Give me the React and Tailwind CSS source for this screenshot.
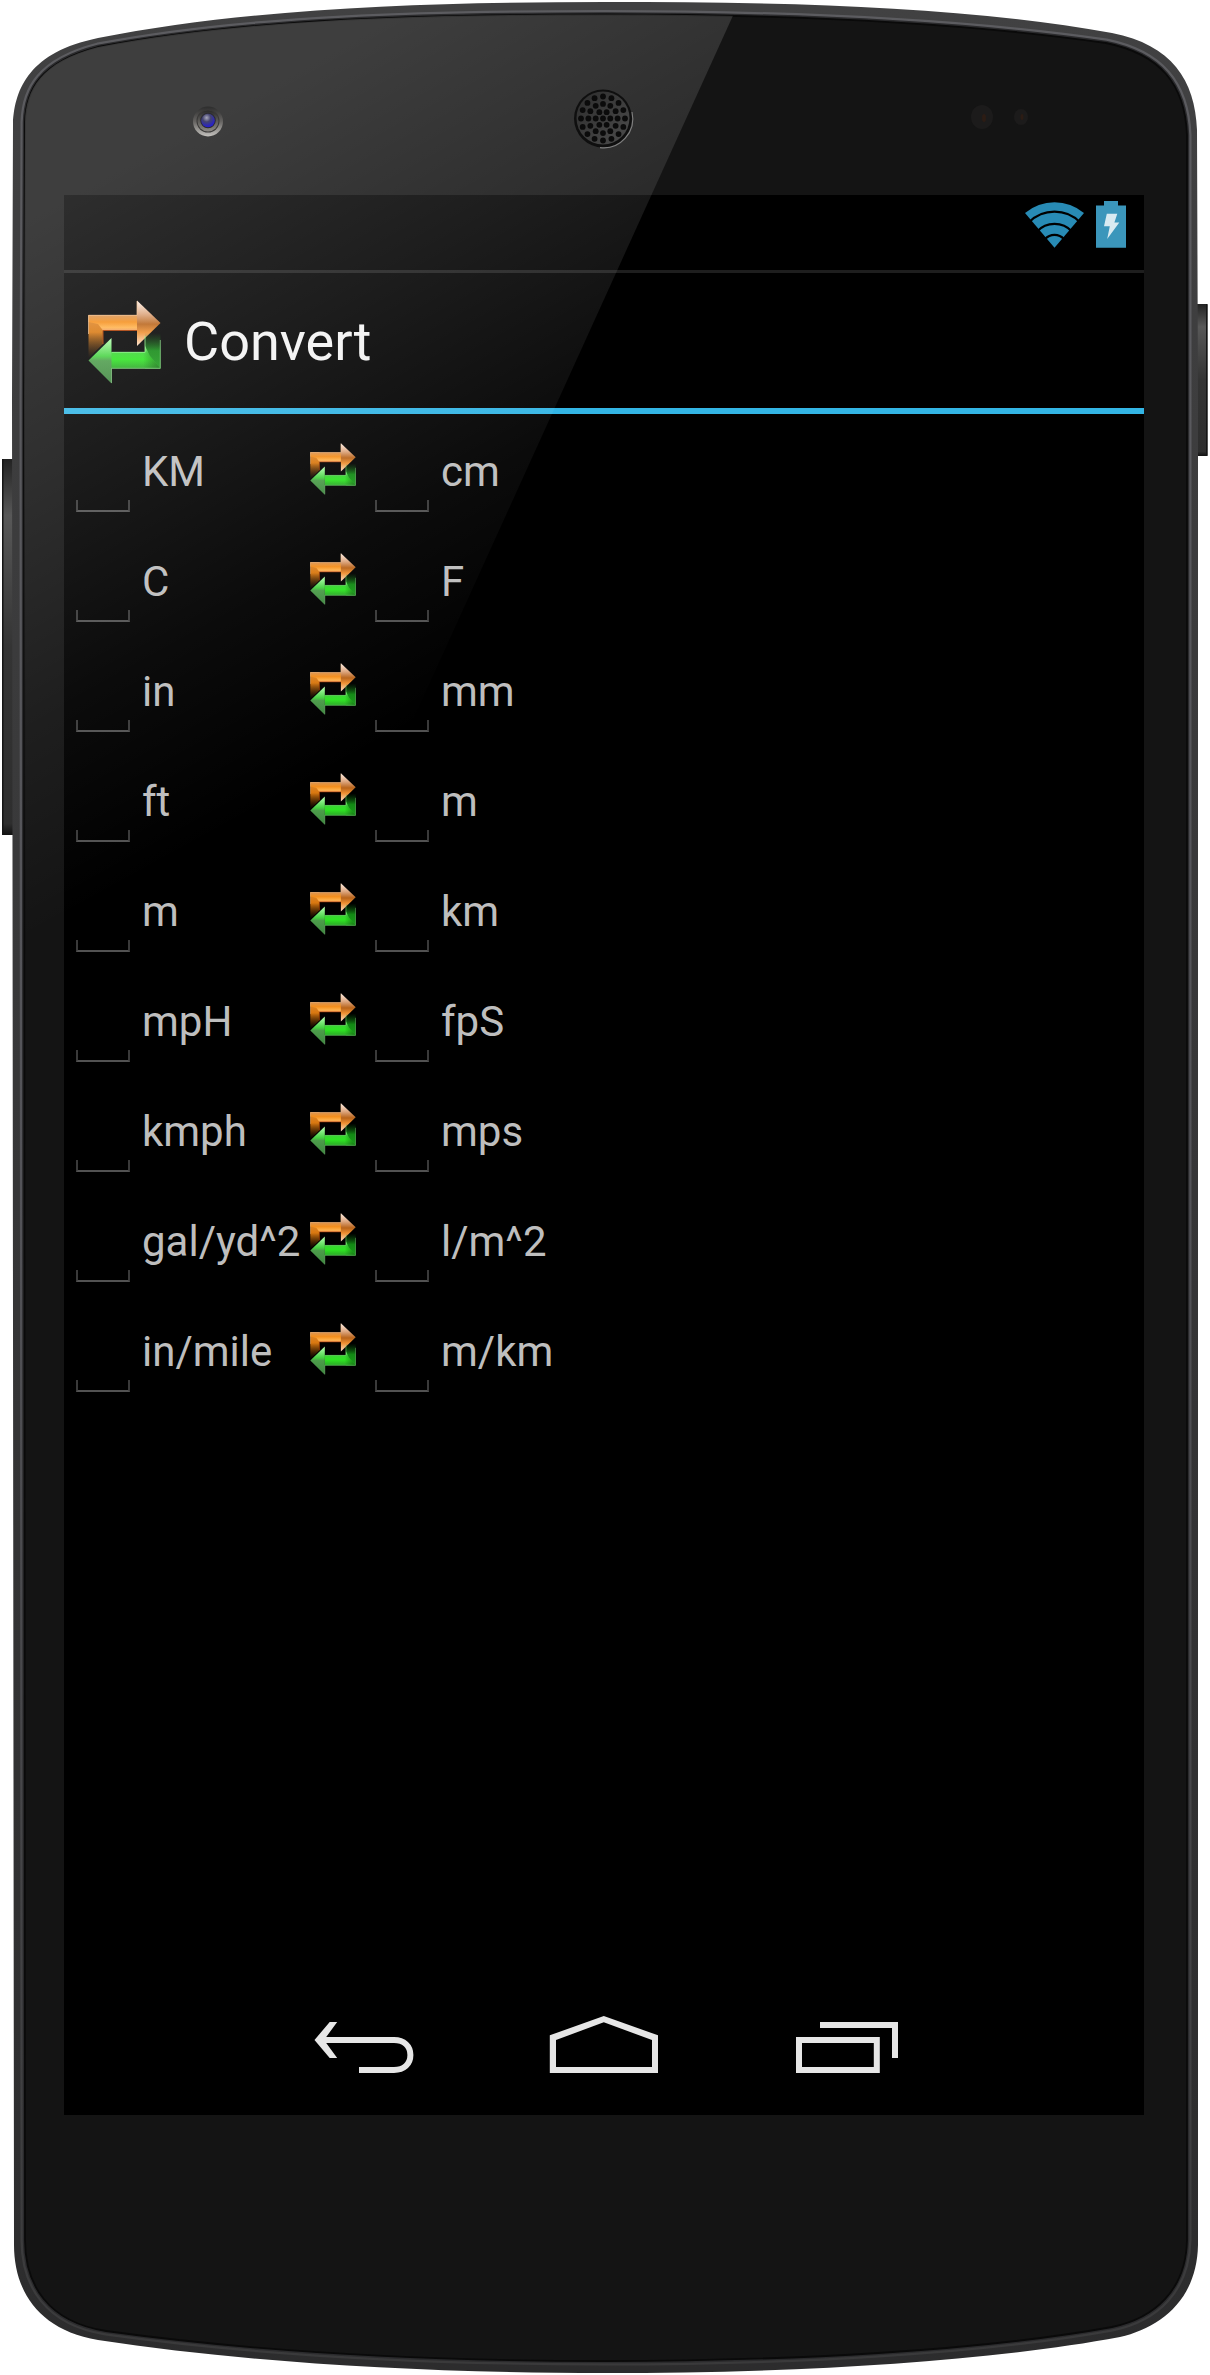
import React from "react";

const OUTER =
  "M12 400 L13 123 C15 88 30 52 98 38 C250 8 430 2 605 2 C790 2 960 6 1112 33 C1172 45 1195 80 1197 130 L1198 400 L1198 2245 C1197 2300 1160 2328 1120 2337 C980 2363 790 2373 605 2373 C420 2373 250 2363 98 2340 C38 2330 14 2290 14 2245 Z";
const INNER =
  "M24 400 L25 122 C26 90 40 62 98 47 C250 18 430 14.5 605 14.5 C790 14.5 960 22 1106 43 C1160 54 1185 84 1187 135 L1187 400 L1187 2240 C1186 2290 1155 2318 1112 2327 C980 2351 790 2361 605 2361 C420 2361 250 2351 106 2331 C48 2322 25 2285 25 2240 Z";

const RINGS = [
  { r: 0, n: 1 },
  { r: 7.3, n: 6 },
  { r: 14.6, n: 12 },
  { r: 22, n: 16 },
];
const HOLES = RINGS.flatMap(({ r, n }) =>
  Array.from({ length: n }, (_, i) => {
    const a = (i / n) * Math.PI * 2;
    return [603 + r * Math.cos(a), 118.5 + r * Math.sin(a)];
  })
);

const UNITS = [
  ["KM", "cm"],
  ["C", "F"],
  ["in", "mm"],
  ["ft", "m"],
  ["m", "km"],
  ["mpH", "fpS"],
  ["kmph", "mps"],
  ["gal/yd^2", "l/m^2"],
  ["in/mile", "m/km"],
];

function Body() {
  return (
    <svg className="absolute inset-0" width="1210" height="2375" viewBox="0 0 1210 2375" aria-hidden="true">
      <defs>
        <linearGradient id="rim" x1="0" y1="0" x2="0" y2="1">
          <stop offset="0" stopColor="#414142" />
          <stop offset="0.5" stopColor="#363637" />
          <stop offset="1" stopColor="#2c2c2d" />
        </linearGradient>
        <linearGradient id="rimLight" x1="0" y1="0" x2="0" y2="1">
          <stop offset="0" stopColor="#5c5c60" />
          <stop offset="0.5" stopColor="#545459" />
          <stop offset="1" stopColor="#3a3a3b" />
        </linearGradient>
        <linearGradient id="key" x1="0" y1="0" x2="0" y2="1">
          <stop offset="0" stopColor="#222" />
          <stop offset="0.15" stopColor="#585858" />
          <stop offset="0.5" stopColor="#343434" />
          <stop offset="0.97" stopColor="#2e2e2e" />
          <stop offset="1" stopColor="#111" />
        </linearGradient>
      </defs>
      <rect x="2" y="459" width="14" height="376" rx="1" fill="url(#key)" />
      <rect x="2" y="459" width="1.5" height="376" fill="#151515" />
      <rect x="1194" y="304" width="13.5" height="152" rx="1" fill="url(#key)" />
      <rect x="1206" y="304" width="1.5" height="152" fill="#151515" />
      <path d={OUTER} fill="url(#rim)" />
      <path d={INNER} fill="#151515" stroke="url(#rimLight)" strokeWidth="9" />
      <path d={INNER} fill="#151515" stroke="#2b2b2d" strokeWidth="4.5" />
      <path d={INNER} fill="#141414" stroke="#0a0a0a" strokeWidth="1.8" />
      <ellipse cx="982" cy="117" rx="11" ry="12" fill="#1c1b1b" />
      <ellipse cx="984" cy="118" rx="2" ry="4" fill="#2c1c14" />
      <ellipse cx="1021" cy="117" rx="7" ry="8" fill="#1c1b1b" />
      <ellipse cx="1022" cy="117" rx="1.5" ry="3" fill="#2c1c14" />
    </svg>
  );
}

function Gloss() {
  return (
    <svg className="pointer-events-none absolute inset-0" width="1210" height="2375" viewBox="0 0 1210 2375" aria-hidden="true">
      <defs>
        <linearGradient id="gloss" gradientUnits="userSpaceOnUse" x1="64" y1="195" x2="371" y2="752">
          <stop offset="0" stopColor="#fff" stopOpacity="0.18" />
          <stop offset="0.35" stopColor="#fff" stopOpacity="0.115" />
          <stop offset="0.7" stopColor="#fff" stopOpacity="0.045" />
          <stop offset="1" stopColor="#fff" stopOpacity="0" />
        </linearGradient>
        <linearGradient id="lensRing" x1="0" y1="0" x2="0" y2="1">
          <stop offset="0" stopColor="#2c2c2c" />
          <stop offset="0.5" stopColor="#666462" />
          <stop offset="1" stopColor="#c4c2be" />
        </linearGradient>
        <linearGradient id="lensInner" x1="0" y1="0" x2="0" y2="1">
          <stop offset="0" stopColor="#2a2a2a" />
          <stop offset="1" stopColor="#8c8984" />
        </linearGradient>
        <radialGradient id="lens" cx="0.4" cy="0.3" r="0.75">
          <stop offset="0" stopColor="#a8a8bc" />
          <stop offset="0.4" stopColor="#44446e" />
          <stop offset="1" stopColor="#2018e0" />
        </radialGradient>
        <linearGradient id="grille" x1="0" y1="0" x2="1" y2="1">
          <stop offset="0" stopColor="#2c2c2c" />
          <stop offset="1" stopColor="#4c4c4c" />
        </linearGradient>
        <clipPath id="face">
          <path d={INNER} />
        </clipPath>
      </defs>
      <path d="M0 0 H740 L733 15.5 L12 1602 H0 Z" fill="url(#gloss)" clipPath="url(#face)" />
      <circle cx="208" cy="121.5" r="15" fill="url(#lensRing)" />
      <circle cx="208" cy="121" r="11.5" fill="#3a3938" />
      <circle cx="208" cy="121" r="10.5" fill="url(#lensInner)" />
      <circle cx="208" cy="120.5" r="7.8" fill="#2c2b30" />
      <circle cx="208" cy="120.5" r="6.8" fill="url(#lens)" />
      <circle cx="603" cy="118.5" r="29" fill="#0f0f0f" />
      <path d="M600 147.6 A29.2 29.2 0 0 0 632 112" fill="none" stroke="#808080" strokeWidth="1.1" />
      <circle cx="603" cy="118" r="26.5" fill="url(#grille)" />
      {HOLES.map(([x, y], i) => (
        <circle key={i} cx={x} cy={y} r="2.9" fill="#0b0b0b" />
      ))}
    </svg>
  );
}

function SwapDefs() {
  return (
    <svg className="absolute" width="0" height="0" aria-hidden="true">
      <defs>
        <linearGradient id="oBar" x1="0" y1="0" x2="0" y2="1">
          <stop offset="0" stopColor="#d99555" />
          <stop offset="0.45" stopColor="#f58f1c" />
          <stop offset="0.8" stopColor="#ffb14a" />
          <stop offset="1" stopColor="#f0a060" />
        </linearGradient>
        <linearGradient id="oLeg" x1="0" y1="0" x2="0" y2="1">
          <stop offset="0" stopColor="#e08a30" />
          <stop offset="0.4" stopColor="#d97810" />
          <stop offset="1" stopColor="#7a3c00" stopOpacity="0" />
        </linearGradient>
        <linearGradient id="oHead" x1="0" y1="0" x2="0" y2="1">
          <stop offset="0" stopColor="#fff0e6" />
          <stop offset="0.3" stopColor="#dca47c" />
          <stop offset="0.52" stopColor="#b9641a" />
          <stop offset="0.7" stopColor="#ee8f30" />
          <stop offset="1" stopColor="#ffe0c8" />
        </linearGradient>
        <linearGradient id="gBar" x1="0" y1="0" x2="0" y2="1">
          <stop offset="0" stopColor="#a4f79a" />
          <stop offset="0.3" stopColor="#3ad634" />
          <stop offset="0.6" stopColor="#2ee322" />
          <stop offset="1" stopColor="#2aa827" />
        </linearGradient>
        <linearGradient id="gShade" x1="0" y1="0" x2="1" y2="0">
          <stop offset="0.65" stopColor="#0b5a0b" stopOpacity="0" />
          <stop offset="1" stopColor="#0b5a0b" stopOpacity="0.7" />
        </linearGradient>
        <linearGradient id="gLeg" x1="0" y1="0" x2="0" y2="1">
          <stop offset="0" stopColor="#0a5a0a" stopOpacity="0" />
          <stop offset="0.5" stopColor="#128a14" />
          <stop offset="1" stopColor="#1d9b1c" />
        </linearGradient>
        <linearGradient id="gHead" x1="0" y1="0" x2="0" y2="1">
          <stop offset="0" stopColor="#b8ffb4" />
          <stop offset="0.4" stopColor="#46d242" />
          <stop offset="0.5" stopColor="#4c9c4a" />
          <stop offset="1" stopColor="#3f8540" />
        </linearGradient>
      </defs>
    </svg>
  );
}

function SwapIcon({ className }) {
  return (
    <svg className={className} viewBox="0 0 73 84" preserveAspectRatio="none" aria-hidden="true">
      <path d="M0.5 15 H15 V44 L0.5 58 Z" fill="url(#oLeg)" />
      <path d="M0.5 15 H50 V30.5 H15 L10 24 L0.5 22 Z" fill="url(#oBar)" />
      <path d="M49 0.5 L72.5 23 L49 46 Z" fill="url(#oHead)" />
      <path d="M15 44 V30.5 H49" fill="none" stroke="#a83a00" strokeWidth="1" />
      <path d="M0.5 34 V15.3 H49 V1" fill="none" stroke="#f3bf8c" strokeWidth="0.9" strokeOpacity="0.8" />
      <path d="M57 33 H72.5 V68.5 H57 Z" fill="url(#gLeg)" />
      <path d="M23 52 H57 V46 L62 56 L72.5 68.5 H23 Z" fill="url(#gBar)" />
      <path d="M23 52 H57 V46 L62 56 L72.5 68.5 H23 Z" fill="url(#gShade)" />
      <path d="M23.5 38 V83.5 L0.5 60.5 Z" fill="url(#gHead)" />
      <path d="M57 36 V52.3 H24" fill="none" stroke="#8cf088" strokeWidth="1" strokeOpacity="0.8" />
      <path d="M72.3 40 V68.3 H23.5 V83" fill="none" stroke="#8ad688" strokeWidth="0.9" strokeOpacity="0.75" />
    </svg>
  );
}

function StatusBar() {
  return (
    <div className="flex h-[75px] items-start justify-end gap-3 pt-1.5 pr-[18px]">
      <svg className="h-[47px] w-[59px]" viewBox="0 0 59 47" aria-label="Wi-Fi">
        <path d="M29.5 46.7 L0 12 A45.6 45.6 0 0 1 59 12 Z" fill="#288bb5" />
        <g fill="none" stroke="#000" strokeWidth="2.2">
          <path d="M4 21.3 A36 36 0 0 1 55 21.3" />
          <path d="M12 30.5 A23.8 23.8 0 0 1 47 30.5" />
          <path d="M20 38.2 A12.7 12.7 0 0 1 39 38.2" />
        </g>
      </svg>
      <svg className="h-[47px] w-[30px]" viewBox="0 0 30 47" aria-label="Battery charging">
        <path d="M8 0 H22 V4.5 H30 V46.7 H0 V4.5 H8 Z" fill="#3b96bb" />
        <path d="M10.8 12.8 H21.3 L18.4 21.6 H23.3 L11.2 38 L13.8 25.2 H8 Z" fill="#d8eaf1" />
      </svg>
    </div>
  );
}

function Field() {
  return <div className="mt-[86px] h-3 w-[54px] border-x-2 border-b-2 border-x-[#3a3a3a] border-b-[#525252]" />;
}

function UnitRow({ from, to }) {
  return (
    <div className="grid h-[110px] grid-cols-[66px_168px_65px_66px_1fr] items-start pl-3 text-[42px] leading-[49px] text-[#bebebe]">
      <Field />
      <span className="mt-[33px] whitespace-nowrap">{from}</span>
      <SwapIcon className="mt-[29px] h-[52px] w-[46px]" />
      <Field />
      <span className="mt-[33px] whitespace-nowrap">{to}</span>
    </div>
  );
}

function NavBar() {
  return (
    <div className="mt-auto flex h-[144px] items-start pt-[45px] pl-[250px]">
      <svg className="h-[58px] w-[100px]" viewBox="314 2016 100 58" aria-label="Back">
        <path d="M314.5 2040 L329.7 2022 H337.2 L324 2040 L337.2 2058 H329.7 Z" fill="#e6e6e6" />
        <path d="M320 2040 H394 C404 2040 410.4 2046 410.4 2055 C410.4 2064 404 2070 394 2070 H359" fill="none" stroke="#e6e6e6" strokeWidth="6" />
      </svg>
      <svg className="ml-[135px] h-[58px] w-[110px]" viewBox="549 2016 110 58" aria-label="Home">
        <path
          d="M549.8 2035.3 L603.8 2016 L658 2035.3 V2073 H549.8 Z M556 2040 V2067 H652 V2040 L603.8 2022.3 Z"
          fill="#e6e6e6"
          fillRule="evenodd"
        />
      </svg>
      <svg className="ml-[137px] h-[58px] w-[102px]" viewBox="796 2016 102 58" aria-label="Recent apps">
        <path d="M799 2040 H876.8 V2070 H799 Z" fill="none" stroke="#e6e6e6" strokeWidth="6" />
        <path d="M820 2025 H895 V2058" fill="none" stroke="#e6e6e6" strokeWidth="6" />
      </svg>
    </div>
  );
}

export default function App() {
  return (
    <div className="relative h-[2375px] w-[1210px] overflow-hidden bg-white pt-[195px] pl-16 font-['Roboto',sans-serif]">
      <Body />
      <SwapDefs />
      <main className="relative flex h-[1920px] w-[1080px] flex-col bg-black">
        <StatusBar />
        <header className="flex h-[144px] items-center border-t-[3px] border-b-[6px] border-t-[#1e1e1e] border-b-[#33b5e5] pt-0.5 pl-6">
          <SwapIcon className="h-[84px] w-[73px]" />
          <h1 className="ml-[23px] text-[54px] leading-[63px] text-[#f3f3f3]">Convert</h1>
        </header>
        <section>
          {UNITS.map(([from, to]) => (
            <UnitRow key={from} from={from} to={to} />
          ))}
        </section>
        <NavBar />
      </main>
      <Gloss />
    </div>
  );
}
